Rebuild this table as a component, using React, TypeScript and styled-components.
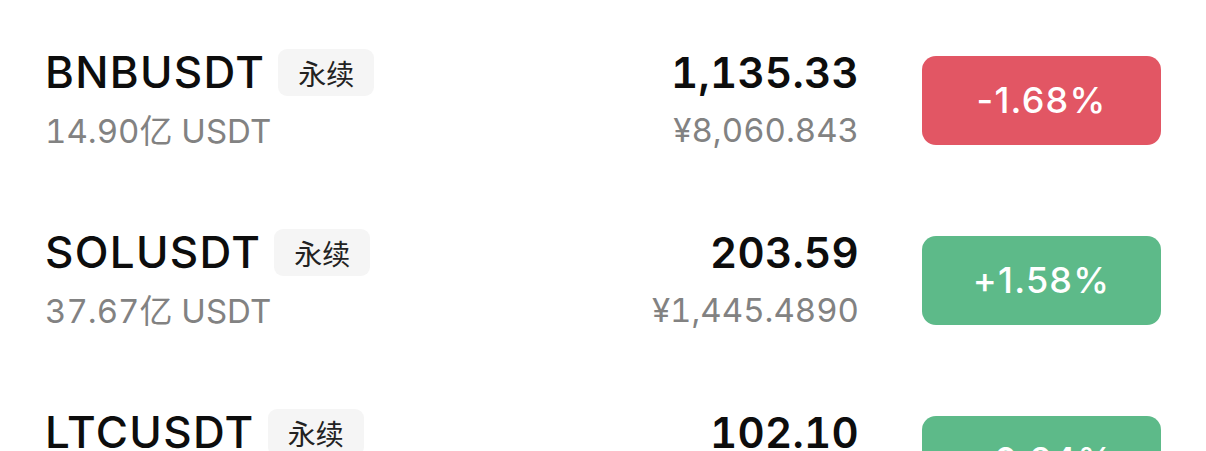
import React from "react";
import styled, { createGlobalStyle } from "styled-components";

const GlobalStyle = createGlobalStyle`
  html, body {
    margin: 0;
    padding: 0;
    background: #ffffff;
  }
  body {
    font-family: Inter, "Noto Sans CJK SC", sans-serif;
    -webkit-font-smoothing: antialiased;
  }
`;

type Ticker = {
  symbol: string;
  volume: string;
  price: string;
  cny: string;
  change: number;
};

const tickers: Ticker[] = [
  { symbol: "BNBUSDT", volume: "14.90亿 USDT", price: "1,135.33", cny: "¥8,060.843", change: -1.68 },
  { symbol: "SOLUSDT", volume: "37.67亿 USDT", price: "203.59", cny: "¥1,445.4890", change: 1.58 },
  { symbol: "LTCUSDT", volume: "5.12亿 USDT", price: "102.10", cny: "¥724.9100", change: 0.24 },
];

const formatChange = (v: number) => (v > 0 ? "+" : "") + v.toFixed(2) + "%";

const App: React.FC = () => {
  return (
    <>
      <GlobalStyle />
      <List>
        {tickers.map((t) => (
          <Row key={t.symbol}>
            <Info>
              <SymbolLine>
                <Symbol>{t.symbol}</Symbol>
                <Tag>永续</Tag>
              </SymbolLine>
              <SubText>{t.volume}</SubText>
            </Info>
            <PriceCol>
              <Price>{t.price}</Price>
              <SubText>{t.cny}</SubText>
            </PriceCol>
            <Change up={t.change >= 0}>{formatChange(t.change)}</Change>
          </Row>
        ))}
      </List>
    </>
  );
};

const List = styled.div`
  width: 1206px;
  height: 451px;
  overflow: hidden;
  padding: 10px 45px 0 45px;
  box-sizing: border-box;
`;

const Row = styled.div`
  display: grid;
  grid-template-columns: 1fr auto 239px;
  column-gap: 63px;
  align-items: center;
  height: 180px;
`;

const Info = styled.div`
  display: flex;
  flex-direction: column;
`;

const SymbolLine = styled.div`
  display: flex;
  align-items: center;
  height: 47px;
`;

const Symbol = styled.span`
  font-size: 44px;
  font-weight: 500;
  color: #0d0d0d;
  line-height: 47px;
  letter-spacing: 1.3px;
`;

const Tag = styled.span`
  margin-left: 13px;
  height: 47px;
  padding: 0 20px;
  display: flex;
  align-items: center;
  background: #f5f5f5;
  border-radius: 9px;
  font-family: "Noto Sans CJK SC", sans-serif;
  font-size: 28px;
  color: #222222;
`;

const SubText = styled.div`
  margin-top: 15px;
  font-size: 33px;
  line-height: 40px;
  color: #828282;
  font-weight: 400;
  font-feature-settings: "tnum";
`;

const PriceCol = styled.div`
  display: flex;
  flex-direction: column;
  align-items: flex-end;
  text-align: right;
`;

const Price = styled.div`
  font-size: 42px;
  line-height: 44px;
  font-weight: 600;
  color: #0d0d0d;
  letter-spacing: 0.3px;
  font-feature-settings: "tnum";
`;

const Change = styled.div<{ up: boolean }>`
  height: 89px;
  border-radius: 14px;
  background: ${(p) => (p.up ? "#5dba89" : "#e25664")};
  color: #ffffff;
  display: flex;
  align-items: center;
  justify-content: center;
  font-size: 36px;
  font-weight: 500;
  letter-spacing: 1.2px;
`;

export default App;
